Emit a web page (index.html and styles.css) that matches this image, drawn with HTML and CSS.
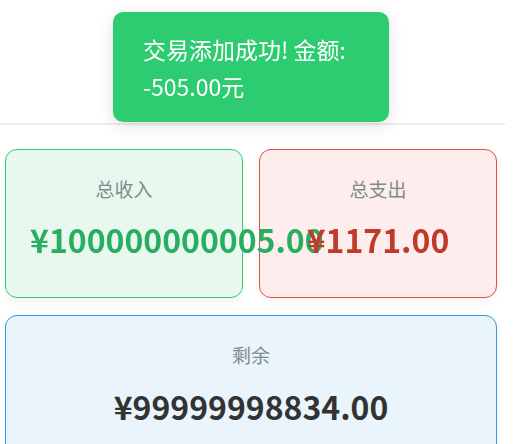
FILE: index.html
```html
<!DOCTYPE html>
<html lang="zh-CN">

<head>
	<meta charset="UTF-8">
	<meta name="viewport" content="width=device-width, initial-scale=1.0">
	<title>记账本</title>
	<link rel="stylesheet" href="styles.css">
</head>

<body>

	<div class="page">
		<header class="top-bar"></header>

		<section class="summary">
			<div class="card income">
				<p class="label">总收入</p>
				<p class="amount">¥100000000005.00</p>
			</div>
			<div class="card expense">
				<p class="label">总支出</p>
				<p class="amount">¥1171.00</p>
			</div>
			<div class="card balance">
				<p class="label">剩余</p>
				<p class="amount">¥99999998834.00</p>
			</div>
		</section>
	</div>

	<div class="toast">交易添加成功! 金额: -505.00元</div>

</body>

</html>
```

FILE: styles.css
```css
body {
	font-family: "Noto Sans CJK SC", "Noto Sans", sans-serif;
	margin: 0;
	padding: 0;
	background: #fff;
	color: #333;
	overflow: hidden;
}

.page {
	width: 505px;
}

.top-bar {
	height: 123px;
	border-bottom: 2px solid #eeeeee;
}

.summary {
	display: grid;
	grid-template-columns: 1fr 1fr;
	gap: 17px 16px;
	width: 492px;
	margin: 24px 0 0 5px;
}

.card {
	border-radius: 12px;
	padding: 23px 24px 36px;
	text-align: center;
	box-shadow: 0 4px 10px rgba(0, 0, 0, 0.05);
	min-width: 0;
}

.card .label {
	margin: 0;
	font-size: 19px;
	line-height: 32px;
	color: #7f8c8d;
}

.card .amount {
	position: relative;
	z-index: 1;
	margin: 12px 0 0;
	font-size: 32px;
	line-height: 44px;
	font-weight: 600;
	white-space: nowrap;
}

.income {
	background: #e9f8ef;
	border: 1px solid #2ecc71;
}

.income .amount {
	color: #27ae60;
}

.expense {
	background: #fdedec;
	border: 1px solid #e74c3c;
}

.expense .amount {
	color: #c0392b;
}

.balance {
	grid-column: span 2;
	background: #eaf4fb;
	border: 1px solid #3498db;
	height: 200px;
}

.balance .amount {
	color: #333;
	margin-top: 13px;
}

.toast {
	position: fixed;
	top: 12px;
	left: 113px;
	width: 216px;
	padding: 19px 30px 17px;
	background: #2ecc71;
	color: #fff;
	font-size: 23px;
	line-height: 37px;
	border-radius: 10px;
	box-shadow: 0 4px 16px rgba(0, 0, 0, 0.12);
}
```
